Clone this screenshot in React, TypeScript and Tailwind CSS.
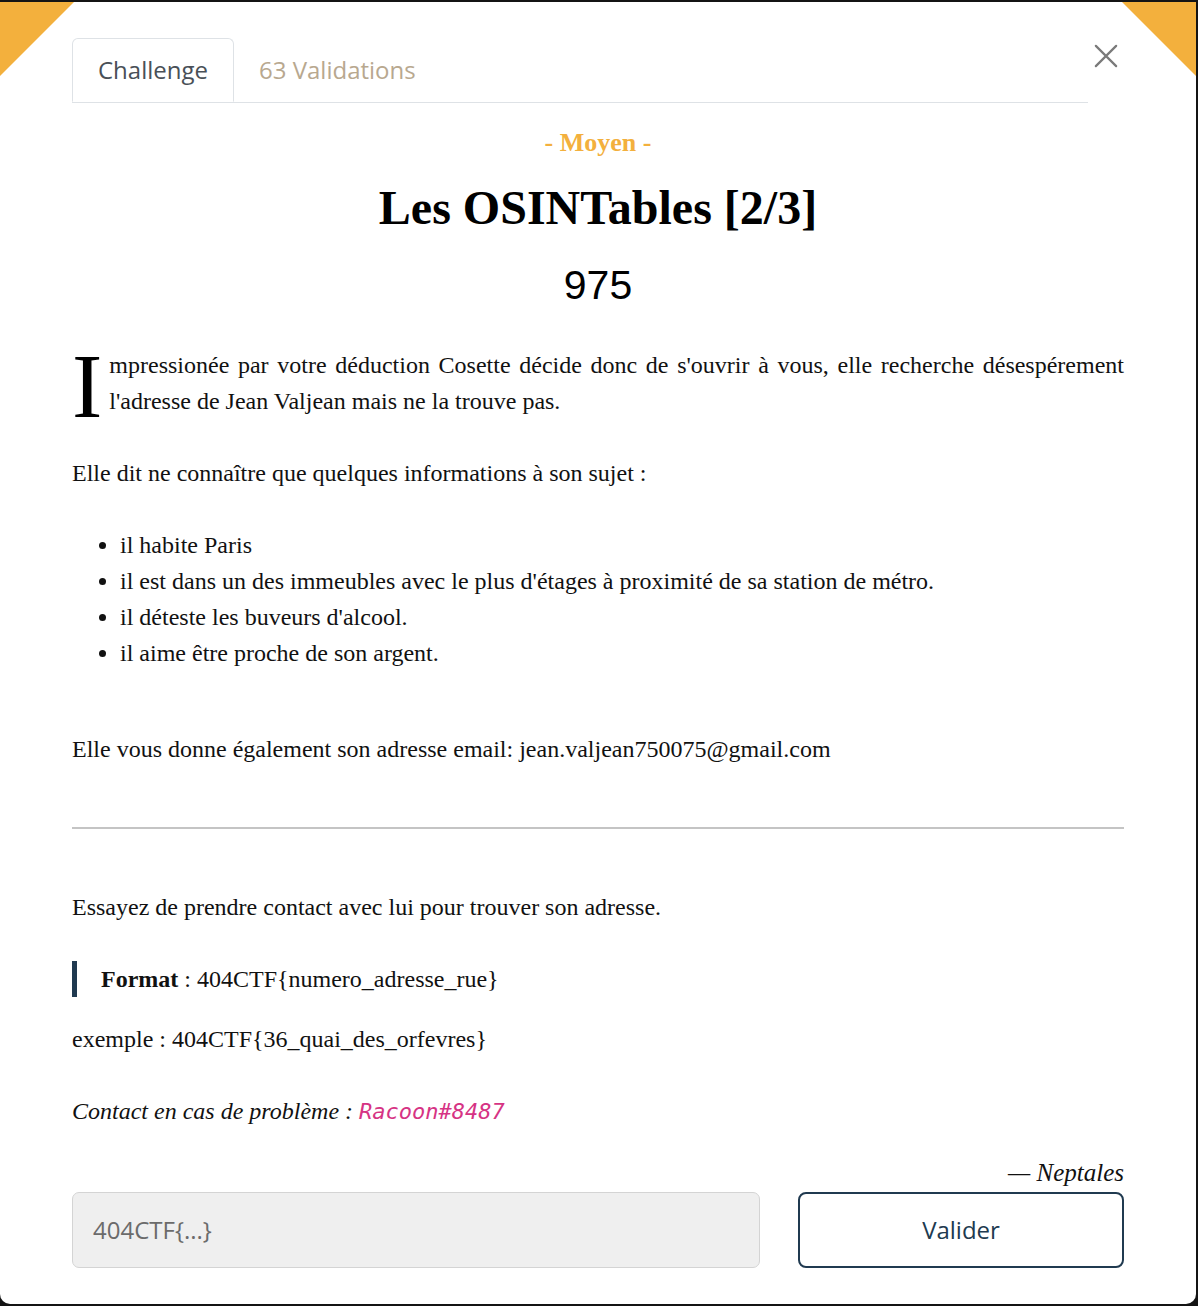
import React from "react";

const serif = "font-['Liberation_Serif','Times_New_Roman',serif]";
const sans = "font-['Open_Sans','Noto_Sans',sans-serif]";

export default function App() {
  return (
    <div className="w-[1198px] h-[1306px] bg-[#141414] pt-[2px] overflow-hidden">
      <div className="relative w-[1196px] h-[1302px] bg-white rounded-b-[10px] overflow-hidden">
        {/* corner triangles */}
        <div className="absolute left-0 top-0 w-0 h-0 border-t-[74px] border-r-[74px] border-t-[#f3b03d] border-r-transparent" />
        <div className="absolute right-0 top-0 w-0 h-0 border-t-[74px] border-l-[74px] border-t-[#f3b03d] border-l-transparent" />

        {/* header with tabs */}
        <div className={`flex items-start pl-[72px] pt-[36px] ${sans}`}>
          <div className="flex w-[1016px] border-b border-[#dee2e6]">
            <div className="h-[64px] px-[25px] flex items-center border border-[#dee2e6] border-b-white rounded-t-[6px] -mb-px bg-white text-[24px] text-[#495057]">
              Challenge
            </div>
            <div className="h-[64px] px-[25px] flex items-center text-[24px] text-[#b8a88f]">
              63 Validations
            </div>
          </div>
          <button className="ml-[6px] mt-[6px] w-[24px] h-[24px] flex items-center justify-center text-[#7a7a7a]">
            <svg width="26" height="26" viewBox="0 0 26 26" fill="none" stroke="currentColor" strokeWidth="2.4" strokeLinecap="round">
              <path d="M2 2 L24 24 M24 2 L2 24" />
            </svg>
          </button>
        </div>

        {/* body */}
        <div className={`px-[72px] text-[24px] leading-[36px] text-[#111] ${serif}`}>
          <div className="mt-[22px] text-center text-[26px] leading-[36px] font-bold text-[#f3b03d]">- Moyen -</div>
          <h1 className="mt-[19px] text-center text-[48px] leading-[56px] font-bold text-black">Les OSINTables [2/3]</h1>
          <div className="mt-[25px] text-center text-[41px] leading-[48px] text-black font-['Liberation_Sans',Arial,sans-serif]">975</div>

          <p className="mt-[38px] text-justify">
            <span className="float-left text-[91px] leading-[68px] mt-[6px] -mb-[2px] mr-[7px] text-black">I</span>
            mpressionée par votre déduction Cosette décide donc de s'ouvrir à vous, elle recherche désespérement l'adresse de Jean Valjean mais ne la trouve pas.
          </p>

          <p className="mt-[36px] clear-both">Elle dit ne connaître que quelques informations à son sujet :</p>

          <ul className="mt-[36px] list-disc pl-[48px]">
            <li>il habite Paris</li>
            <li>il est dans un des immeubles avec le plus d'étages à proximité de sa station de métro.</li>
            <li>il déteste les buveurs d'alcool.</li>
            <li>il aime être proche de son argent.</li>
          </ul>

          <p className="mt-[60px]">Elle vous donne également son adresse email: jean.valjean750075@gmail.com</p>

          <hr className="mt-[60px] border-0 h-[2px] bg-[#c4c4c4]" />

          <p className="mt-[60px]">Essayez de prendre contact avec lui pour trouver son adresse.</p>

          <blockquote className="mt-[36px] border-l-[5px] border-[#203a50] pl-[24px]">
            <strong>Format</strong> : 404CTF{"{"}numero_adresse_rue{"}"}
          </blockquote>

          <p className="mt-[24px]">exemple : 404CTF{"{"}36_quai_des_orfevres{"}"}</p>

          <p className="mt-[36px] italic">
            Contact en cas de problème :{" "}
            <code className="font-['DejaVu_Sans_Mono',monospace] text-[22px] text-[#d63384]">Racoon#8487</code>
          </p>

          <p className="mt-[25px] text-right italic text-[25px]">— Neptales</p>

          <div className={`mt-px flex gap-[38px] ${sans}`}>
            <div className="w-[688px] h-[76px] bg-[#efefef] border border-[#d4d4d4] rounded-[7px] flex items-center pl-[20px] text-[24px] text-[#6b6b6b]">
              404CTF{"{...}"}
            </div>
            <button className="w-[326px] h-[76px] border-2 border-[#203a50] rounded-[8px] text-[24px] text-[#203a50] flex items-center justify-center">
              Valider
            </button>
          </div>
        </div>
      </div>
    </div>
  );
}
